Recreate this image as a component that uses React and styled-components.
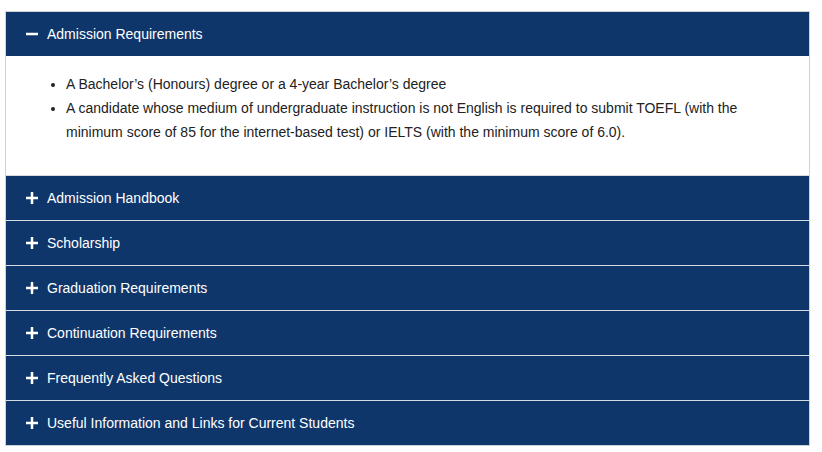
import React, { useState } from "react";
import styled, { createGlobalStyle } from "styled-components";

const Global = createGlobalStyle`
  html, body { margin: 0; padding: 0; background: #fff; }
  body { font-family: "Liberation Sans", Arial, Helvetica, sans-serif; }
`;

const Page = styled.div`
  padding: 11px 12px 0 5px;
`;

const Accordion = styled.div`
  border: 1px solid #cfd3d8;
  width: 803px;
`;

const Item = styled.div`
  & + & { border-top: 1px solid #d6dbe2; }
`;

const Header = styled.button`
  display: flex;
  align-items: center;
  gap: 9px;
  width: 100%;
  height: 44px;
  padding: 0 0 0 20px;
  border: 0;
  background: #0f366b;
  color: #fff;
  font-family: "Liberation Sans", Arial, Helvetica, sans-serif;
  font-size: 14px;
  text-align: left;
  cursor: pointer;
`;

const Icon = styled.svg`
  width: 12px;
  height: 12px;
  flex: none;
`;

const Body = styled.div`
  background: #fff;
  padding: 16px 40px 31px 0;
`;

const List = styled.ul`
  margin: 0;
  padding-left: 60px;
  color: #222;
  font-size: 14px;
  line-height: 24px;
`;

const items = [
  { title: "Admission Requirements" },
  { title: "Admission Handbook" },
  { title: "Scholarship" },
  { title: "Graduation Requirements" },
  { title: "Continuation Requirements" },
  { title: "Frequently Asked Questions" },
  { title: "Useful Information and Links for Current Students" },
];

function ToggleIcon({ open }) {
  return (
    <Icon viewBox="0 0 12 12">
      <rect x="0" y="4.75" width="12" height="2.5" fill="#fff" />
      {!open && <rect x="4.75" y="0" width="2.5" height="12" fill="#fff" />}
    </Icon>
  );
}

export default function App() {
  const [openIdx, setOpenIdx] = useState(0);
  return (
    <>
      <Global />
      <Page>
        <Accordion>
          {items.map((it, i) => (
            <Item key={it.title}>
              <Header onClick={() => setOpenIdx(openIdx === i ? -1 : i)}>
                <ToggleIcon open={openIdx === i} />
                {it.title}
              </Header>
              {openIdx === i && i === 0 && (
                <Body>
                  <List>
                    <li>A Bachelor’s (Honours) degree or a 4-year Bachelor’s degree</li>
                    <li>
                      A candidate whose medium of undergraduate instruction is not English is
                      required to submit TOEFL (with the minimum score of 85 for the
                      internet-based test) or IELTS (with the minimum score of 6.0).
                    </li>
                  </List>
                </Body>
              )}
            </Item>
          ))}
        </Accordion>
      </Page>
    </>
  );
}
